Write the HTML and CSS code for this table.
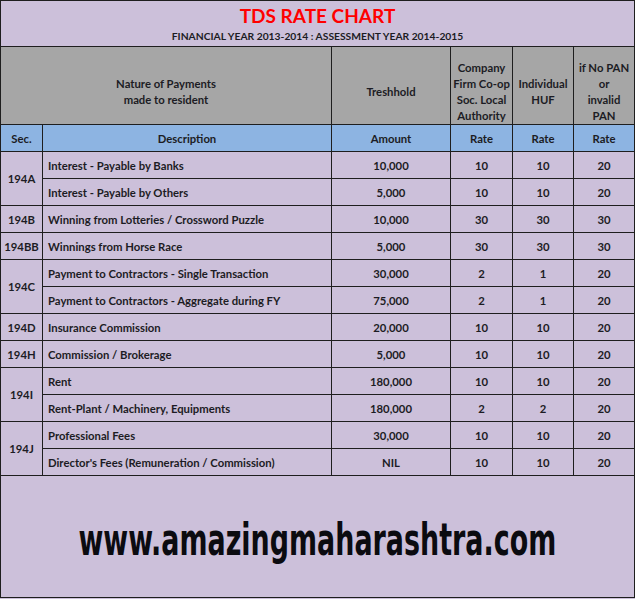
FILE: index.html
```html
<!DOCTYPE html>
<html>
<head>
<meta charset="utf-8">
<link rel="stylesheet" href="styles.css">
<title>TDS Rate Chart</title>
</head>
<body>
<table class="chart">
  <colgroup>
    <col class="c-sec"><col class="c-desc"><col class="c-amt"><col class="c-r1"><col class="c-r2"><col class="c-r3">
  </colgroup>
  <tr class="r-title">
    <td colspan="6">
      <div class="title">TDS RATE CHART</div>
      <div class="subtitle">FINANCIAL YEAR 2013-2014 : ASSESSMENT YEAR 2014-2015</div>
    </td>
  </tr>
  <tr class="r-head">
    <td colspan="2">Nature of Payments<br>made to resident</td>
    <td>Treshhold</td>
    <td>Company<br>Firm Co-op<br>Soc. Local<br>Authority</td>
    <td>Individual<br>HUF</td>
    <td>if No PAN<br>or<br>invalid<br>PAN</td>
  </tr>
  <tr class="r-blue">
    <td>Sec.</td><td>Description</td><td>Amount</td><td>Rate</td><td>Rate</td><td>Rate</td>
  </tr>
  <tr class="r-data">
    <td rowspan="2" class="sec">194A</td><td class="desc">Interest - Payable by Banks</td><td>10,000</td><td>10</td><td>10</td><td>20</td>
  </tr>
  <tr class="r-data">
    <td class="desc">Interest - Payable by Others</td><td>5,000</td><td>10</td><td>10</td><td>20</td>
  </tr>
  <tr class="r-data">
    <td class="sec">194B</td><td class="desc">Winning from Lotteries / Crossword Puzzle</td><td>10,000</td><td>30</td><td>30</td><td>30</td>
  </tr>
  <tr class="r-data">
    <td class="sec">194BB</td><td class="desc">Winnings from Horse Race</td><td>5,000</td><td>30</td><td>30</td><td>30</td>
  </tr>
  <tr class="r-data">
    <td rowspan="2" class="sec">194C</td><td class="desc">Payment to Contractors - Single Transaction</td><td>30,000</td><td>2</td><td>1</td><td>20</td>
  </tr>
  <tr class="r-data">
    <td class="desc">Payment to Contractors - Aggregate during FY</td><td>75,000</td><td>2</td><td>1</td><td>20</td>
  </tr>
  <tr class="r-data">
    <td class="sec">194D</td><td class="desc">Insurance Commission</td><td>20,000</td><td>10</td><td>10</td><td>20</td>
  </tr>
  <tr class="r-data">
    <td class="sec">194H</td><td class="desc">Commission / Brokerage</td><td>5,000</td><td>10</td><td>10</td><td>20</td>
  </tr>
  <tr class="r-data">
    <td rowspan="2" class="sec">194I</td><td class="desc">Rent</td><td>180,000</td><td>10</td><td>10</td><td>20</td>
  </tr>
  <tr class="r-data">
    <td class="desc">Rent-Plant / Machinery, Equipments</td><td>180,000</td><td>2</td><td>2</td><td>20</td>
  </tr>
  <tr class="r-data">
    <td rowspan="2" class="sec">194J</td><td class="desc">Professional Fees</td><td>30,000</td><td>10</td><td>10</td><td>20</td>
  </tr>
  <tr class="r-data">
    <td class="desc">Director's Fees (Remuneration / Commission)</td><td>NIL</td><td>10</td><td>10</td><td>20</td>
  </tr>
  <tr class="r-foot">
    <td colspan="6"><div class="site-wrap"><span class="site">www.amazingmaharashtra.com</span></div></td>
  </tr>
</table>
</body>
</html>
```

FILE: styles.css
```css
html, body {
  margin: 0;
  padding: 0;
  background: #ccc0da;
}
.chart {
  width: 634px;
  border-collapse: collapse;
  table-layout: fixed;
  font-family: Lato, "Open Sans", sans-serif;
  font-weight: bold;
  font-size: 11.3px;
  color: #1c1c24;
  background: #ccc0da;
}
.chart td {
  border: 1px solid #1e1e1e;
  padding: 0;
  text-align: center;
  vertical-align: middle;
}
.c-sec { width: 42px; }
.c-desc { width: 289px; }
.c-amt { width: 119px; }
.c-r1 { width: 62px; }
.c-r2 { width: 61px; }
.c-r3 { width: 61px; }

.r-title td {
  height: 45px;
  vertical-align: top;
}
.title {
  color: #ff0000;
  font-size: 19px;
  line-height: 24px;
  margin-top: 3px;
}
.subtitle {
  font-size: 10.3px;
  line-height: 14px;
  margin-top: 1px;
}
.r-head td {
  background: #a6a6a6;
  height: 64px;
  padding-top: 13px;
  line-height: 16px;
}
.r-blue td {
  background: #8db4e2;
  height: 26px;
}
.r-data td {
  height: 26px;
}
.r-data td.desc {
  text-align: left;
  padding-left: 5px;
}
.r-foot td {
  height: 121px;
  overflow: hidden;
}
.site-wrap {
  display: flex;
  justify-content: center;
  margin-top: 6px;
}
.site {
  flex: none;
  white-space: nowrap;
  font-family: "DejaVu Sans Condensed", "DejaVu Sans", sans-serif;
  font-weight: bold;
  font-size: 44px;
  color: #0b0b10;
  transform: scaleX(0.68);
  transform-origin: center;
}
```
